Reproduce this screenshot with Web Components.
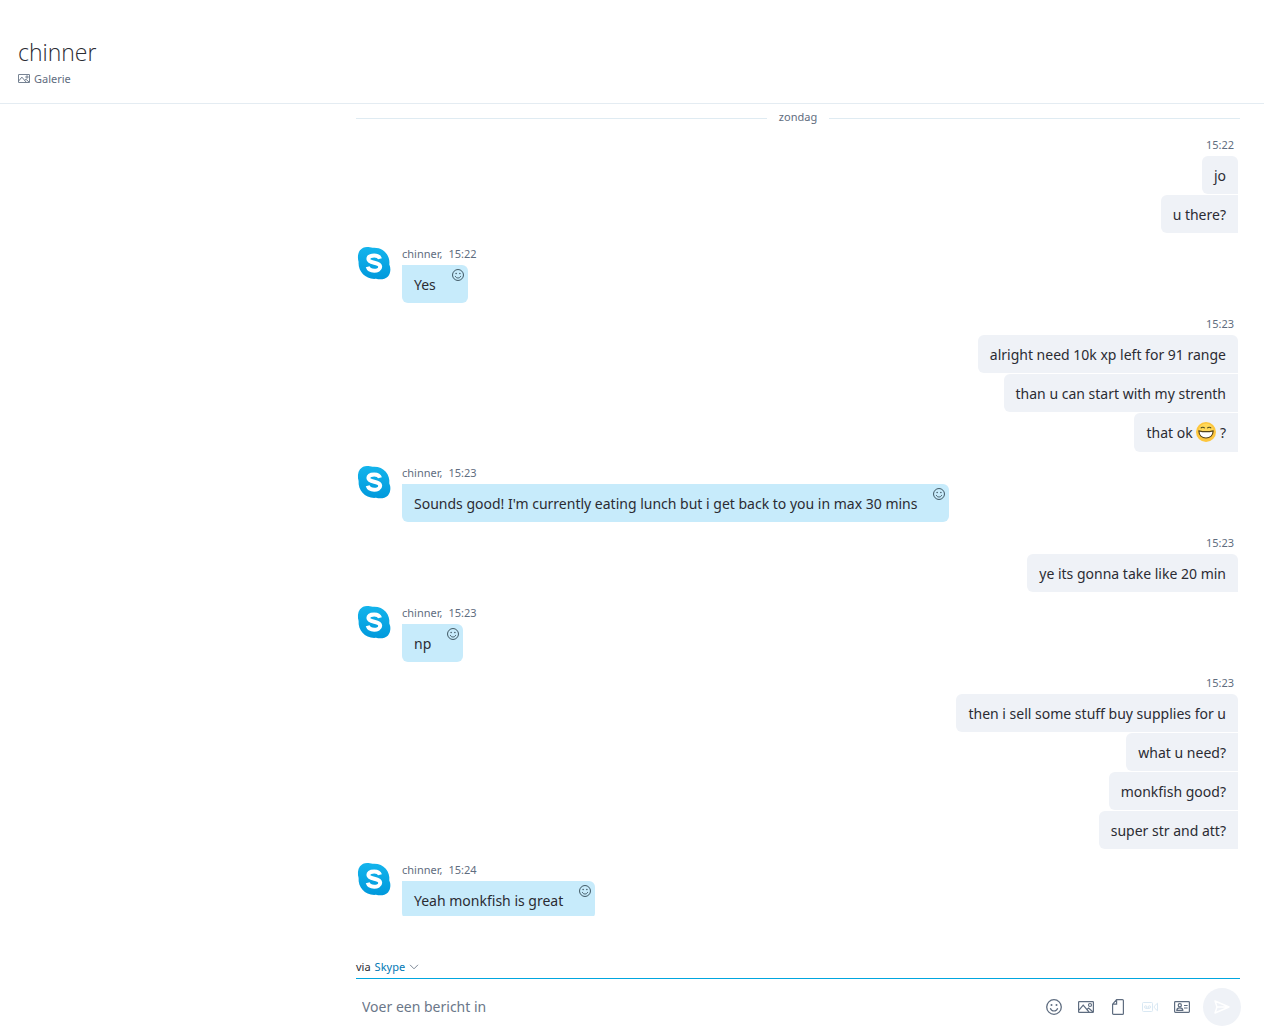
<!DOCTYPE html>
<html lang="nl">
<head>
<meta charset="utf-8">
<title>chinner</title>
<style>
  html, body { margin: 0; height: 100%; background: #fff; }
  body { font-family: "Segoe UI", "Noto Sans", "Open Sans", sans-serif; font-size: 14px; color: #2b2c33; }
</style>
</head>
<body>
<skype-chat>
  <chat-header slot="header" name="chinner"></chat-header>
  <day-divider>zondag</day-divider>
  <message-group own time="15:22">
    <chat-bubble own>jo</chat-bubble>
    <chat-bubble own>u there?</chat-bubble>
  </message-group>
  <message-group author="chinner" time="15:22">
    <chat-bubble>Yes</chat-bubble>
  </message-group>
  <message-group own time="15:23">
    <chat-bubble own>alright need 10k xp left for 91 range</chat-bubble>
    <chat-bubble own>than u can start with my strenth</chat-bubble>
    <chat-bubble own>that ok <grin-emoji></grin-emoji> ?</chat-bubble>
  </message-group>
  <message-group author="chinner" time="15:23">
    <chat-bubble>Sounds good! I'm currently eating lunch but i get back to you in max 30 mins</chat-bubble>
  </message-group>
  <message-group own time="15:23">
    <chat-bubble own>ye its gonna take like 20 min</chat-bubble>
  </message-group>
  <message-group author="chinner" time="15:23">
    <chat-bubble>np</chat-bubble>
  </message-group>
  <message-group own time="15:23">
    <chat-bubble own>then i sell some stuff buy supplies for u</chat-bubble>
    <chat-bubble own>what u need?</chat-bubble>
    <chat-bubble own>monkfish good?</chat-bubble>
    <chat-bubble own>super str and att?</chat-bubble>
  </message-group>
  <message-group author="chinner" time="15:24">
    <chat-bubble>Yeah monkfish is great</chat-bubble>
  </message-group>
  <chat-composer slot="composer"></chat-composer>
</skype-chat>

<script>
const RESET = `
  * { box-sizing: border-box; }
  button { border: 0; padding: 0; margin: 0; background: none; font: inherit; color: inherit; cursor: pointer; }
  svg { display: block; }
`;
const ICONS = {
  smile: `<svg viewBox="0 0 16 16" fill="none" stroke="currentColor"><circle cx="8" cy="8" r="7.3" stroke-width="1.3"/><path d="M4.3 9.3c.6 1.8 2 2.7 3.7 2.7s3.100-.9 3.700-2.700" stroke-width="1.2"/><circle cx="5.500" cy="6" r="1" fill="currentColor" stroke="none"/><circle cx="10.500" cy="6" r="1" fill="currentColor" stroke="none"/></svg>`,
  picture: `<svg viewBox="0 0 16 12" fill="none" stroke="currentColor" stroke-width="1.200"><rect x=".6" y=".6" width="14.800" height="10.800" rx=".6"/><path d="M1 9.200 5.200 4.200 11 11M9 8.400 10.600 7 15 11"/><circle cx="12" cy="4" r="1.500"/></svg>`,
  file: `<svg viewBox="0 0 12 16" fill="none" stroke="currentColor" stroke-width="1.200"><path d="M4.600.6H10.400a1 1 0 0 1 1 1V14.400a1 1 0 0 1-1 1H1.600a1 1 0 0 1-1-1V5.200Z M4.600.6V5.200H.6"/></svg>`,
  video: `<svg viewBox="0 0 16 10" fill="none" stroke="currentColor"><rect x=".5" y=".5" width="10" height="9" rx="1"/><circle cx="3.700" cy="5" r="1.200"/><circle cx="7.400" cy="5" r="1.200"/><path d="M3.700 6.400h3.700M12.300 4.200 15.500 1.200V8.800L12.300 5.800Z"/></svg>`,
  card: `<svg viewBox="0 0 16 12" fill="none" stroke="currentColor" stroke-width="1.200"><rect x=".6" y=".6" width="14.800" height="10.800" rx=".8"/><circle cx="5.800" cy="4.200" r="1.600"/><path d="M2.800 9.400c0-1.800 1-2.600 3-2.600s3 .8 3 2.600ZM10 4.500h3.600M10 7h3.600"/></svg>`,
  send: `<svg viewBox="0 0 16 14" fill="none" stroke="currentColor" stroke-width="1.400" stroke-linejoin="round"><path d="M1 1 15 7 1 13 3 7ZM3 7H15"/></svg>`,
  chevron: `<svg viewBox="0 0 10 6" fill="none" stroke="currentColor"><path d="M1 .8 5 4.800 9 .8"/></svg>`
};
function define(name, render) {
  customElements.define(name, class extends HTMLElement {
    connectedCallback() {
      if (this.shadowRoot) return;
      const t = document.createElement('template');
      t.innerHTML = render(this);
      this.attachShadow({ mode: 'open' }).append(t.content.cloneNode(true));
    }
  });
}

define('skype-chat', () => `
  <style>${RESET}
    :host { display: flex; flex-direction: column; height: 100vh; }
    main { flex: 1; min-height: 0; overflow: hidden; }
    .column { max-width: 884px; margin: 0 24px 0 auto; }
    .thread { display: flex; flex-direction: column; gap: 12px; }
  </style>
  <slot name="header"></slot>
  <main><div class="column thread"><slot></slot></div></main>
  <footer><div class="column"><slot name="composer"></slot></div></footer>`);

define('chat-header', el => `
  <style>${RESET}
    :host { display: block; padding: 35px 18px 16px; border-bottom: 1px solid #e4ecf2; }
    h1 { margin: 0 0 1px; font-family: "Segoe UI", "Open Sans", sans-serif; font-size: 23px; font-weight: 300; line-height: 34px; color: #2b2c33; }
    button { display: flex; align-items: center; gap: 4px; font-size: 11px; line-height: 17px; color: #5f6d80; }
    svg { width: 12px; height: 9px; }
  </style>
  <h1>${el.getAttribute('name')}</h1>
  <button type="button">${ICONS.picture}Galerie</button>`);

define('day-divider', () => `
  <style>${RESET}
    :host { display: flex; align-items: center; gap: 12px; padding-top: 8px; height: 12px; font-size: 11px; line-height: 12px; color: #5f6d80; }
    i { flex: 1; height: 1px; background: #dfebf2; }
    span { padding-bottom: 2px; }
  </style>
  <i></i><span><slot></slot></span><i></i>`);

define('skype-avatar', () => `
  <style>:host { display: block; width: 34px; height: 34px; } svg { display: block; }</style>
  <svg width="34" height="34" viewBox="0 0 34 34" role="img" aria-label="Skype">
    <defs><linearGradient id="g" x1="0" y1="0" x2="0" y2="1"><stop offset="0" stop-color="#14b4ec"/><stop offset="1" stop-color="#0099dc"/></linearGradient></defs>
    <g fill="url(#g)"><path d="M10 1C12 1 14 1.300 15.500 1.800C26 .8 33.500 9 32.300 18.500C34 22 33.800 27 31 30.500C28 33.600 23 33.800 19 32.800C8.500 33.800 .8 25.500 1.600 16C.5 12 .6 7.500 3 4.300C4.800 2.200 7.200 1 10 1Z"/></g>
    <path d="M23 12.800C22.200 10.100 19.900 9.500 17.200 9.500C14 9.500 11.400 10.600 11.400 13.100C11.400 18 23.200 15.600 23.200 20.700C23.200 23.400 20.200 24.700 17.200 24.700C13.900 24.700 11.500 23.600 10.700 20.800" fill="none" stroke="#fff" stroke-width="4"/>
  </svg>`);

define('message-group', el => {
  const own = el.hasAttribute('own');
  return `
  <style>${RESET}
    :host { display: flex; gap: 11px; padding: 0 2px 0 1px; }
    :host([own]) { justify-content: flex-end; }
    skype-avatar { margin-top: 1px; flex: none; }
    .body { display: flex; flex-direction: column; align-items: flex-start; }
    :host([own]) .body { align-items: flex-end; }
    .meta { display: flex; gap: 6px; padding-bottom: 2px; font-size: 11px; line-height: 18px; color: #5f6d80; }
    :host([own]) .meta { padding-right: 4px; }
    .list { display: flex; flex-direction: column; align-items: inherit; gap: 1px; }
  </style>
  ${own ? '' : '<skype-avatar></skype-avatar>'}
  <div class="body"><div class="meta">${own ? '' : `<span>${el.getAttribute('author')},</span> `}<time>${el.getAttribute('time')}</time></div><div class="list"><slot></slot></div></div>`;
});

define('chat-bubble', el => `
  <style>${RESET}
    :host { display: flex; align-items: flex-start; padding: 10px 4px 8px 12px; gap: 16px; line-height: 20px;
      background: #c7ebfb; border-radius: 0 6px 6px 6px; }
    :host([own]) { padding-right: 12px; background: #eff2f7; border-radius: 6px 0 0 6px; }
    :host([own]:first-child) { border-top-right-radius: 6px; }
    button { margin-top: -6px; color: #3c5360; }
    svg { width: 12px; height: 12px; }
  </style>
  <span><slot></slot></span>${el.hasAttribute('own') ? '' : `<button type="button" aria-label="Reageren">${ICONS.smile}</button>`}`);

define('grin-emoji', () => `
  <style>:host { display: inline-block; vertical-align: middle; height: 22px; margin-top: -3px; } svg { display: block; }</style>
  <svg width="20" height="20" viewBox="0 0 20 20" role="img" aria-label="lachend">
    <circle cx="10" cy="10" r="10" fill="#fdc63d"/><circle cx="10" cy="8.500" r="7" fill="#ffd95a"/>
    <path d="M4.800 6.200C5.600 4.900 7.900 4.900 8.700 6.200M11.300 6.200C12.100 4.900 14.400 4.900 15.200 6.200" fill="none" stroke="#4f4a1e" stroke-width="1.100"/>
    <path d="M2.800 8.800Q10 10.600 17.200 8.800C17 13.200 14 16 10 16S3 13.200 2.800 8.800Z" fill="#fff" stroke="#54431a" stroke-width="1.200" stroke-linejoin="round"/>
  </svg>`);

define('icon-button', el => `
  <style>${RESET}
    :host { display: block; color: #5f6d80; }
    :host([disabled]) { color: #d9e8f3; }
    button { display: flex; align-items: center; justify-content: center; width: 16px; height: 32px; }
    svg { width: 16px; height: 16px; }
  </style>
  <button type="button" aria-label="${el.getAttribute('label')}" ${el.hasAttribute('disabled') ? 'disabled' : ''}>${ICONS[el.getAttribute('icon')]}</button>`);

define('chat-composer', () => `
  <style>${RESET}
    :host { display: block; padding: 41px 0 8px; }
    .via { display: flex; align-items: flex-start; gap: 4px; height: 22px; font-size: 11px; line-height: 20px; border-bottom: 1px solid #00a6df; }
    .via button { display: flex; align-items: center; gap: 4px; color: #0078b4; }
    .via svg { width: 10px; height: 6px; color: #7d8896; }
    form { display: flex; align-items: center; margin: 9px -1px 0 0; }
    input { flex: 1; min-width: 0; height: 32px; padding: 0 6px 2px; border: 0; outline: 0; background: none; font: inherit; color: #2b2c33; }
    input::placeholder { color: #6b7789; opacity: 1; }
    .tools { display: flex; gap: 16px; margin-right: 13px; }
    .send { display: flex; align-items: center; justify-content: center; width: 38px; height: 38px; border-radius: 50%; background: #eff2f7; color: #fff; }
    .send svg { width: 16px; height: 14px; }
  </style>
  <div class="via"><span>via</span><button type="button">Skype${ICONS.chevron}</button></div>
  <form>
    <input type="text" aria-label="Voer een bericht in" placeholder="Voer een bericht in">
    <div class="tools">
      <icon-button icon="smile" label="Emoticons"></icon-button>
      <icon-button icon="picture" label="Afbeelding"></icon-button>
      <icon-button icon="file" label="Bestand"></icon-button>
      <icon-button icon="video" label="Videobericht" disabled></icon-button>
      <icon-button icon="card" label="Contactpersoon"></icon-button>
    </div>
    <button class="send" type="button" aria-label="Verzenden">${ICONS.send}</button>
  </form>`);
</script>
</body>
</html>
